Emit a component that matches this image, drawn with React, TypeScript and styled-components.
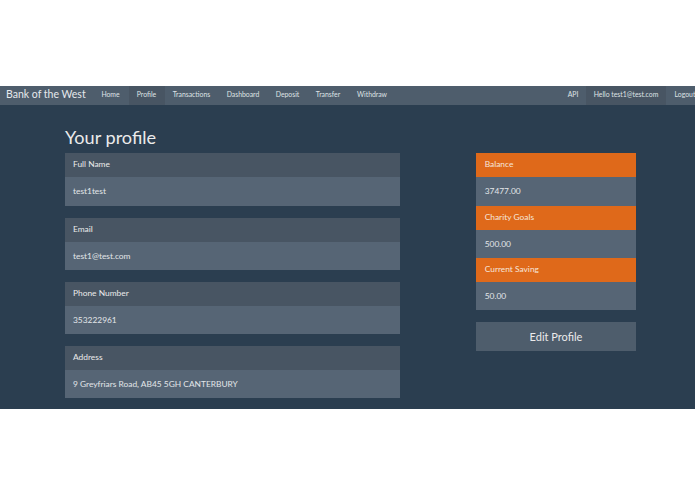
import React from "react";
import styled, { createGlobalStyle } from "styled-components";

const Global = createGlobalStyle`
  html, body { margin: 0; padding: 0; background: #fff; }
  body { font-family: Lato, "Open Sans", sans-serif; }
  * { box-sizing: border-box; }
`;

const Page = styled.div`
  width: 695px;
  height: 494px;
  padding: 86px 0 85px;
  overflow: hidden;
`;

const Frame = styled.div`
  height: 323px;
  background: #2b3e50;
  overflow: hidden;
`;

const Navbar = styled.nav`
  height: 19px;
  background: #4e5d6c;
  display: flex;
  align-items: stretch;
  color: #ebebeb;
`;

const Brand = styled.div`
  font-size: 10.5px;
  line-height: 16px;
  padding: 0 0 0 6px;
  width: 92.5px;
  flex: none;
  white-space: nowrap;
  color: #e6e9ec;
`;

const NavList = styled.div<{ $end?: boolean }>`
  display: flex;
  margin-left: ${(p) => (p.$end ? "auto" : "0")};
  margin-right: ${(p) => (p.$end ? "-9px" : "0")};
`;

const NavItem = styled.a<{ $active?: boolean; $w: number }>`
  width: ${(p) => p.$w}px;
  flex: none;
  font-size: 6.85px;
  line-height: 16.5px;
  text-align: center;
  white-space: nowrap;
  color: #dfe3e6;
  background: ${(p) => (p.$active ? "#485563" : "transparent")};
`;

const Content = styled.main`
  padding: 0 59px 0 65px;
  display: grid;
  grid-template-columns: 335px 160px;
  justify-content: space-between;
`;

const Title = styled.h1`
  grid-column: 1 / -1;
  margin: 0;
  height: 48.4px;
  padding-top: 19px;
  font-size: 18.1px;
  line-height: 26px;
  font-weight: 400;
  color: #ebebeb;
`;

const LeftColumn = styled.section`
  display: flex;
  flex-direction: column;
  gap: 11.8px;
`;

const Panel = styled.div`
  background: #566575;
`;

const PanelHeading = styled.div`
  height: 24px;
  padding-left: 8px;
  font-size: 8.4px;
  line-height: 23.4px;
  color: #ebebeb;
  background: #485563;
`;

const PanelBody = styled.div`
  height: 28.4px;
  padding-left: 8px;
  font-size: 8.4px;
  line-height: 28.6px;
  color: #e3e6e9;
  background: #566575;
`;

const RightColumn = styled.aside`
  display: flex;
  flex-direction: column;
`;

const StatHeading = styled(PanelHeading)`
  padding-left: 8.7px;
  background: #df691a;
  color: #f6e6da;
`;

const StatBody = styled(PanelBody)`
  height: 28.3px;
  padding-left: 8.7px;
`;

const EditButton = styled.button`
  margin-top: 12px;
  height: 29px;
  border: 0;
  padding: 0 0 1px;
  width: 100%;
  background: #4e5d6c;
  color: #ebebeb;
  font-family: inherit;
  font-size: 11px;
`;

const fields = [
  ["Full Name", "test1test"],
  ["Email", "test1@test.com"],
  ["Phone Number", "353222961"],
  ["Address", "9 Greyfriars Road, AB45 5GH CANTERBURY"],
];

const stats = [
  ["Balance", "37477.00"],
  ["Charity Goals", "500.00"],
  ["Current Saving", "50.00"],
];

const left: [string, number, boolean?][] = [
  ["Home", 36],
  ["Profile", 36, true],
  ["Transactions", 54],
  ["Dashboard", 49],
  ["Deposit", 40],
  ["Transfer", 41],
  ["Withdraw", 47],
];

const right: [string, number, boolean?][] = [
  ["API", 26],
  ["Hello test1@test.com", 80, true],
  ["Logout", 38],
];

export default function App() {
  return (
    <Page>
      <Global />
      <Frame>
        <Navbar>
          <Brand>Bank of the West</Brand>
          <NavList>
            {left.map(([t, w, a]) => (
              <NavItem key={t} $w={w} $active={a}>{t}</NavItem>
            ))}
          </NavList>
          <NavList $end>
            {right.map(([t, w, a]) => (
              <NavItem key={t} $w={w} $active={a}>{t}</NavItem>
            ))}
          </NavList>
        </Navbar>
        <Content>
          <Title>Your profile</Title>
          <LeftColumn>
            {fields.map(([h, v]) => (
              <Panel key={h}>
                <PanelHeading>{h}</PanelHeading>
                <PanelBody>{v}</PanelBody>
              </Panel>
            ))}
          </LeftColumn>
          <RightColumn>
            <Panel>
              {stats.map(([h, v]) => (
                <React.Fragment key={h}>
                  <StatHeading>{h}</StatHeading>
                  <StatBody>{v}</StatBody>
                </React.Fragment>
              ))}
            </Panel>
            <EditButton>Edit Profile</EditButton>
          </RightColumn>
        </Content>
      </Frame>
    </Page>
  );
}
